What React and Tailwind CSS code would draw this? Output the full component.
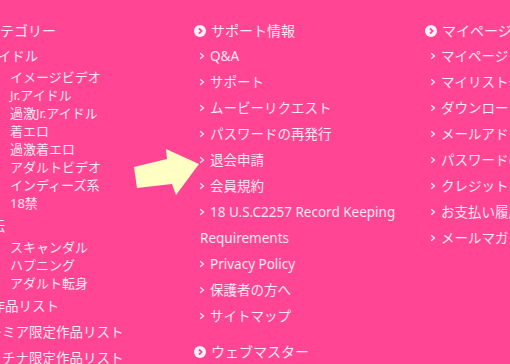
import React from 'react';

const FONT = { fontFamily: '"Noto Sans", "Noto Sans CJK JP", sans-serif' };

const CircleIcon = () => (
  <svg width="12" height="12" viewBox="0 0 12 12" className="shrink-0">
    <circle cx="6" cy="6" r="6" fill="#fff1f7" />
    <path d="M5 3.3 L7.6 6 L5 8.7" fill="none" stroke="#ff4593" strokeWidth="1.8" />
  </svg>
);

const Chevron = () => (
  <svg width="6" height="8" viewBox="0 0 6 8" className="shrink-0">
    <path d="M1.2 1.2 L4.4 4 L1.2 6.8" fill="none" stroke="#ffe6f1" strokeWidth="1.3" />
  </svg>
);

const Heading = ({ children }) => (
  <div className="h-[25px] flex items-center gap-[5px] text-[14px]">
    <CircleIcon />
    <span>{children}</span>
  </div>
);

const Item = ({ children }) => (
  <div className="h-[26px] flex items-center gap-[5px] pl-[5px] text-[13.5px] whitespace-nowrap">
    <Chevron />
    <span>{children}</span>
  </div>
);

const Sub = ({ children }) => (
  <div className="h-[18px] flex items-center pl-[41px] text-[13px] whitespace-nowrap">{children}</div>
);

const support = ['Q&A', 'サポート', 'ムービーリクエスト', 'パスワードの再発行', '退会申請', '会員規約'];
const support2 = ['Privacy Policy', '保護者の方へ', 'サイトマップ'];
const mypage = ['マイページ', 'マイリスト一覧', 'ダウンロード履歴', 'メールアドレス変更', 'パスワードの変更', 'クレジットカード変更', 'お支払い履歴', 'メールマガジン設定'];
const idol = ['イメージビデオ', 'Jr.アイドル', '過激Jr.アイドル', '着エロ', '過激着エロ', 'アダルトビデオ', 'インディーズ系', '18禁'];
const geino = ['スキャンダル', 'ハプニング', 'アダルト転身'];

export default function App() {
  return (
    <div className="w-[510px] h-[364px] overflow-hidden bg-[#ff4593] text-[#ffe6f1] relative" style={FONT}>
      <div className="flex pt-[18px]">
        <div className="w-[225px] shrink-0 -ml-[31px]">
          <Heading>カテゴリー</Heading>
          <Item>アイドル</Item>
          {idol.map((t) => <Sub key={t}>{t}</Sub>)}
          <div className="-ml-[7px]"><Item>宣伝</Item></div>
          {geino.map((t) => <Sub key={t}>{t}</Sub>)}
          <div className="-ml-[7px]"><Item>全作品リスト</Item></div>
          <div className="-ml-[10px]"><Item>プレミア限定作品リスト</Item></div>
          <div className="-ml-[10px]"><Item>プラチナ限定作品リスト</Item></div>
        </div>
        <div className="w-[231px] shrink-0">
          <Heading>サポート情報</Heading>
          {support.map((t) => <Item key={t}>{t}</Item>)}
          <Item>18 U.S.C2257 Record Keeping</Item>
          <div className="h-[26px] flex items-center pl-[6px] text-[13.5px]">Requirements</div>
          {support2.map((t) => <Item key={t}>{t}</Item>)}
          <div className="mt-[10px]">
            <Heading>ウェブマスター</Heading>
          </div>
        </div>
        <div className="w-[200px] shrink-0">
          <Heading>マイページ</Heading>
          {mypage.map((t) => <Item key={t}>{t}</Item>)}
        </div>
      </div>
      <svg className="absolute left-0 top-0" width="510" height="364" viewBox="0 0 510 364">
        <polygon
          points="134,167 167,159 166,149 199,164 176,195 172,184 137,188"
          fill="#ffffc4"
        />
      </svg>
    </div>
  );
}
